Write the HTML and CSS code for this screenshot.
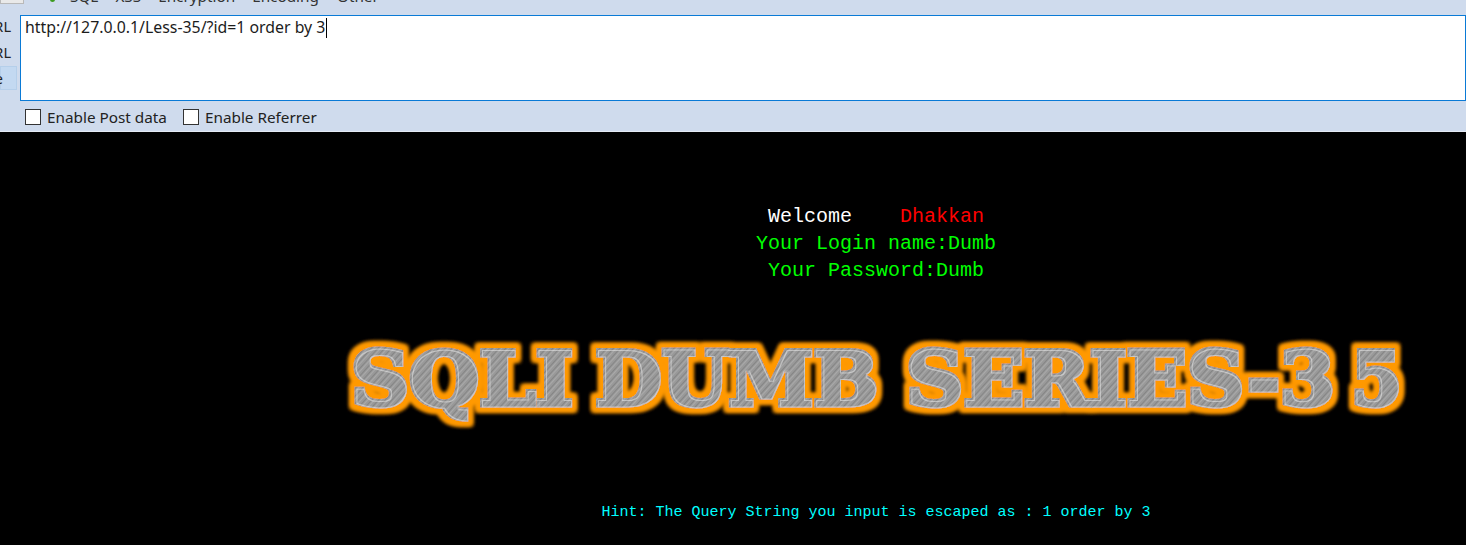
FILE: index.html
```html
<!DOCTYPE html>
<html lang="en">
<head>
<meta charset="utf-8">
<title>Less-35</title>
<link rel="stylesheet" href="styles.css">
</head>
<body>
<header class="toolbar">
  <div class="menu-row">
    <div class="tab-stub"></div>
    <nav class="menu">
      <span class="menu-dot"></span>
      <span class="m-sql">SQL</span>
      <span class="m-xss">XSS</span>
      <span class="m-enc">Encryption</span>
      <span class="m-cod">Encoding</span>
      <span>Other</span>
    </nav>
  </div>
  <div class="url-row">
    <div class="side">
      <div class="side-btn">Load URL</div>
      <div class="side-btn">Split URL</div>
      <div class="side-btn active">Execute</div>
    </div>
    <div class="url-box">http://127.0.0.1/Less-35/?id=1 order by 3<span class="caret"></span></div>
  </div>
  <div class="options">
    <label class="opt"><span class="check"></span>Enable Post data</label>
    <label class="opt"><span class="check"></span>Enable Referrer</label>
  </div>
</header>
<main class="page">
  <div class="msg">
    <div class="welcome"><span class="white">Welcome</span>    <span class="red">Dhakkan</span></div>
    <div>Your Login name:Dumb</div>
    <div>Your Password:Dumb</div>
  </div>
  <svg class="title" width="1100" height="110" viewBox="0 0 1100 110" role="img" aria-label="SQLI DUMB SERIES-35">
    <defs>
      <pattern id="brush" width="4" height="5" patternUnits="userSpaceOnUse" patternTransform="rotate(-48)">
        <rect width="4" height="5" fill="#999999"/>
        <rect width="4" height="1" fill="#858585"/>
        <rect y="2" width="4" height="1" fill="#a9a9a9"/>
      </pattern>
      <filter id="glow" x="-5%" y="-40%" width="110%" height="180%">
        <feMorphology in="SourceAlpha" operator="dilate" radius="3.5" result="fat"/>
        <feGaussianBlur in="fat" stdDeviation="2.2" result="soft"/>
        <feFlood flood-color="#ff9900"/>
        <feComposite in2="soft" operator="in" result="orange"/>
        <feMorphology in="SourceAlpha" operator="erode" radius="1" result="in1"/>
        <feMorphology in="SourceAlpha" operator="erode" radius="2" result="in2"/>
        <feComposite in="in1" in2="in2" operator="out" result="ring"/>
        <feOffset in="ring" dx="0.5" dy="0.5" result="ringoff"/>
        <feFlood flood-color="#ffffff" flood-opacity="0.35"/>
        <feComposite in2="ringoff" operator="in" result="edge"/>
        <feMerge>
          <feMergeNode in="orange"/>
          <feMergeNode in="orange"/>
          <feMergeNode in="orange"/>
          <feMergeNode in="SourceGraphic"/>
          <feMergeNode in="edge"/>
        </feMerge>
      </filter>
    </defs>
    <g class="title-text" filter="url(#glow)">
      <text x="25" y="82" textLength="222" lengthAdjust="spacingAndGlyphs">SQLI</text>
      <text x="269" y="82" textLength="283" lengthAdjust="spacingAndGlyphs">DUMB</text>
      <text x="580" y="82" textLength="429" lengthAdjust="spacingAndGlyphs">SERIES-3</text>
      <text x="1025" y="82" textLength="51" lengthAdjust="spacingAndGlyphs">5</text>
    </g>
  </svg>
  <div class="hint">Hint: The Query String you input is escaped as : 1 order by 3</div>
</main>
</body>
</html>
```
FILE: styles.css
```css
* { box-sizing: border-box; }
html, body { margin: 0; height: 100%; overflow: hidden; background: #000; }
body { display: flex; flex-direction: column; }

.toolbar {
  height: 132px;
  background: #cfdbed;
  border-bottom: 1px solid #e4eaf4;
  font-family: "Noto Sans", sans-serif;
  font-size: 15.3px;
  color: #222;
  flex: none;
}
.menu-row { height: 15px; display: flex; overflow: hidden; }
.tab-stub {
  width: 24px;
  height: 4px;
  background: #e9e9e9;
  border: 1px solid #b9b9b9;
  border-top: 0;
  flex: none;
}
.menu {
  display: flex;
  align-items: center;
  height: 20px;
  margin-top: -14px;
  line-height: 20px;
  padding-left: 26px;
  flex: none;
  color: #333;
}
.menu-dot {
  width: 5px; height: 5px;
  margin-right: 15px;
  margin-top: 6px;
  border-radius: 50%;
  background: #3c9b1f;
}
.m-sql { margin-right: 17px; }
.m-xss { margin-right: 17px; }
.m-enc { margin-right: 17px; }
.m-cod { margin-right: 18px; }

.url-row { display: flex; height: 86px; }
.side { width: 20px; flex: none; overflow: hidden; margin-top: -2px; }
.side-btn {
  width: 17px;
  height: 26px;
  display: flex;
  justify-content: flex-end;
  align-items: center;
  white-space: nowrap;
  padding-right: 6px;
  font-size: 14.5px;
}
.side-btn.active {
  background: #c3d9f1;
  border: 1px solid #b5cfea;
  height: 24px;
  margin-top: 1px;
  padding-right: 13px;
}
.url-box {
  flex: 1;
  background: #fff;
  border: 1px solid #0a7ad6;
  padding: 0 4px;
  font-size: 15.85px;
  line-height: 22px;
  color: #1c1c1c;
  white-space: pre;
}
.caret {
  display: inline-block;
  width: 1px;
  height: 20px;
  margin-left: 1px;
  vertical-align: -5px;
  background: #000;
}
.options { display: flex; gap: 16px; padding: 5px 0 0 25px; line-height: 22px; }
.opt { display: flex; align-items: center; gap: 6px; }
.check { width: 16px; height: 16px; background: #fff; border: 1px solid #333; }

.page {
  flex: 1;
  min-height: 0;
  background: #000;
  margin-left: 286px;
  display: flex;
  flex-direction: column;
  align-items: center;
  font-family: "Liberation Mono", monospace;
}
.msg {
  padding-top: 71px;
  font-size: 20px;
  line-height: 27px;
  color: #00ff00;
  text-align: center;
}
.welcome { white-space: pre; }
.white { color: #fff; }
.red { color: #ff0000; }
.title { display: block; flex: none; margin-top: 39px; }
.title-text {
  font-family: "DejaVu Serif", serif;
  font-weight: 700;
  font-size: 74px;
  fill: url(#brush);
  stroke: url(#brush);
  stroke-width: 5px;
  stroke-linejoin: miter;
}
.hint {
  margin-top: 70px;
  font-size: 15px;
  line-height: 20px;
  color: #00ffff;
  white-space: pre;
}
```
